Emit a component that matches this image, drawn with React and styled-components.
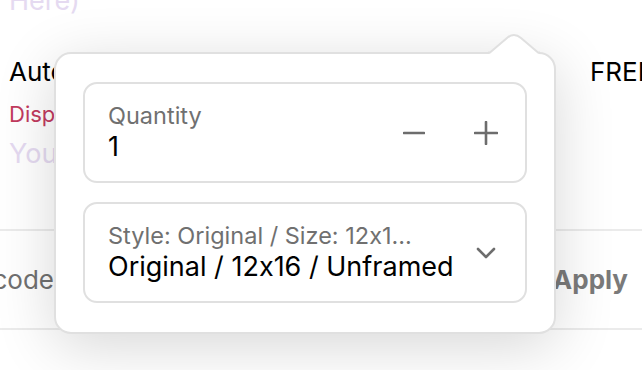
import React from 'react';
import styled, { createGlobalStyle } from 'styled-components';

const GlobalStyle = createGlobalStyle`
  body {
    margin: 0;
    background: #ffffff;
    font-family: Inter, "Noto Sans", sans-serif;
    font-feature-settings: "calt" 0;
    overflow: hidden;
  }
`;

function MinusIcon() {
    return (
        <svg width="22" height="22" viewBox="0 0 22 22">
            <path d="M1 11 H21" stroke="#6d6d6d" strokeWidth="2.6" strokeLinecap="round" />
        </svg>
    );
}

function PlusIcon() {
    return (
        <svg width="24" height="24" viewBox="0 0 24 24">
            <path d="M1 12 H23 M12 1 V23" stroke="#6d6d6d" strokeWidth="2.6" strokeLinecap="round" />
        </svg>
    );
}

function ChevronIcon() {
    return (
        <svg width="20" height="12" viewBox="0 0 20 12">
            <path d="M2 2 L10 10 L18 2" fill="none" stroke="#6d6d6d" strokeWidth="2.6" strokeLinecap="round" strokeLinejoin="round" />
        </svg>
    );
}

function Arrow() {
    return (
        <ArrowSvg width="52" height="24" viewBox="0 0 52 24">
            <path d="M1 22 L19 7 Q26 1 33 7 L51 22 Z" fill="#ffffff" />
            <path d="M0 20.5 L2 20.5 L19 6 Q26 0 33 6 L50 20.5 L52 20.5" fill="none" stroke="#e0e0e0" strokeWidth="2" strokeLinejoin="round" />
        </ArrowSvg>
    );
}

function App() {
    return (
        <Page>
            <GlobalStyle />
            <FadedLine $offset={-16}>Here)</FadedLine>
            <SummaryRow>
                <SummaryTitle>Automatic discount</SummaryTitle>
                <SummaryTitle>FREE</SummaryTitle>
            </SummaryRow>
            <Notice>Display only</Notice>
            <FadedLine $offset={9}>You save today</FadedLine>
            <PromoRow>
                <CodeField><span>Discount code</span></CodeField>
                <ApplyButton>Apply</ApplyButton>
            </PromoRow>

            <Popover>
                <Arrow />
                <Field>
                    <FieldText>
                        <FieldLabel>Quantity</FieldLabel>
                        <FieldValue>1</FieldValue>
                    </FieldText>
                    <Stepper>
                        <IconButton aria-label="Decrease"><MinusIcon /></IconButton>
                        <IconButton aria-label="Increase"><PlusIcon /></IconButton>
                    </Stepper>
                </Field>
                <Field>
                    <FieldText>
                        <FieldLabel>Style: Original / Size: 12x1...</FieldLabel>
                        <FieldValue>Original / 12x16 / Unframed</FieldValue>
                    </FieldText>
                    <ChevronSlot><ChevronIcon /></ChevronSlot>
                </Field>
            </Popover>
        </Page>
    );
}

const Page = styled.div`
    position: relative;
    width: 642px;
    height: 370px;
    overflow: hidden;
    display: flex;
    flex-direction: column;
`;

const FadedLine = styled.div`
    margin-top: ${p => p.$offset}px;
    padding-left: 9px;
    font-size: 27px;
    line-height: 34px;
    color: #e5daf1;
`;

const SummaryRow = styled.div`
    display: grid;
    grid-template-columns: 581px auto;
    padding-left: 9px;
    margin-top: 38px;
    white-space: nowrap;
`;

const SummaryTitle = styled.div`
    font-size: 26px;
    line-height: 32px;
    color: #000;
`;

const Notice = styled.div`
    padding-left: 9px;
    margin-top: 12px;
    font-size: 22px;
    line-height: 28px;
    color: #c23a5e;
`;

const PromoRow = styled.div`
    margin-top: 58px;
    height: 97px;
    border-top: 2px solid #ebebeb;
    border-bottom: 2px solid #ebebeb;
    display: flex;
    align-items: center;
    justify-content: space-between;
    padding-right: 14px;
`;

const CodeField = styled.div`
    width: 54px;
    overflow: hidden;
    display: flex;
    justify-content: flex-end;
    white-space: nowrap;
    font-size: 26px;
    color: #707070;
`;

const ApplyButton = styled.div`
    font-size: 26px;
    font-weight: 700;
    color: #7a7a7a;
`;

const Popover = styled.div`
    position: absolute;
    left: 54px;
    top: 52px;
    width: 502px;
    box-sizing: border-box;
    padding: 28px 27px 29px;
    background: #fff;
    border: 2px solid #e0e0e0;
    border-radius: 17px;
    box-shadow: 0 12px 60px rgba(0, 0, 0, 0.16);
    display: flex;
    flex-direction: column;
    gap: 19px;
`;

const ArrowSvg = styled.svg`
    position: absolute;
    left: 432px;
    top: -22px;
`;

const Field = styled.div`
    height: 101px;
    box-sizing: border-box;
    border: 2px solid #e0e0e0;
    border-radius: 14px;
    display: flex;
    align-items: center;
    justify-content: space-between;
    padding: 0 17px 0 23px;
`;

const FieldText = styled.div`
    display: flex;
    flex-direction: column;
    white-space: nowrap;
`;

const FieldLabel = styled.div`
    font-size: 23.5px;
    line-height: 29px;
    color: #707070;
`;

const FieldValue = styled.div`
    font-size: 27px;
    line-height: 34px;
    color: #000;
`;

const Stepper = styled.div`
    display: flex;
    gap: 28px;
`;

const IconButton = styled.button`
    width: 44px;
    height: 44px;
    padding: 0;
    border: none;
    background: none;
    display: flex;
    align-items: center;
    justify-content: center;
`;

const ChevronSlot = styled.div`
    width: 44px;
    display: flex;
    justify-content: center;
`;

export default App
